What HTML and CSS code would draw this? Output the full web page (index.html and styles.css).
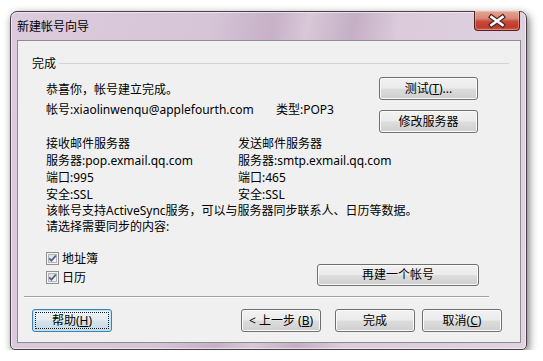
FILE: index.html
```html
<!DOCTYPE html>
<html lang="zh-CN">
<head>
  <meta charset="UTF-8" />
  <title>新建帐号向导</title>
  <link rel="stylesheet" href="styles.css">
</head>
<body>

  <!-- wizard window -->
  <div class="window">
    <div class="titlebar">
      <span class="title">新建帐号向导</span>
      <button class="close" aria-label="关闭">
        <svg width="46" height="20" viewBox="0 0 46 20">
          <path d="M18.5 6 L29.5 14 M29.5 6 L18.5 14" stroke="#4a2a26" stroke-width="5" stroke-linecap="square" fill="none"/>
          <path d="M18.5 6 L29.5 14 M29.5 6 L18.5 14" stroke="#ffffff" stroke-width="2.6" stroke-linecap="square" fill="none"/>
        </svg>
      </button>
    </div>

    <div class="client">
      <div class="group-head"><span>完成</span></div>

      <div class="summary">
        <div class="summary-text">
          <div class="line">恭喜你，帐号建立完成。</div>
          <div class="line second"><span class="acc">帐号:xiaolinwenqu@applefourth.com</span><span>类型:POP3</span></div>
        </div>
        <div class="side-buttons">
          <button class="btn side">测试(<u>T</u>)...</button>
          <button class="btn side">修改服务器</button>
        </div>
      </div>

      <div class="servers">
        <div>接收邮件服务器</div><div>发送邮件服务器</div>
        <div>服务器:pop.exmail.qq.com</div><div>服务器:smtp.exmail.qq.com</div>
        <div>端口:995</div><div>端口:465</div>
        <div>安全:SSL</div><div>安全:SSL</div>
      </div>

      <div class="sync">
        <div>该帐号支持ActiveSync服务，可以与服务器同步联系人、日历等数据。</div>
        <div>请选择需要同步的内容:</div>
      </div>

      <div class="options">
        <div class="checks">
          <label class="check">
            <svg class="box" width="13" height="13" viewBox="0 0 13 13">
              <defs>
                <linearGradient id="boxfill" x1="0" y1="0" x2="1" y2="1">
                  <stop offset="0" stop-color="#d8d8d8"/>
                  <stop offset="1" stop-color="#fbfbfb"/>
                </linearGradient>
              </defs>
              <rect x="0.5" y="0.5" width="12" height="12" fill="#f4f4f4" stroke="#8e8f8f"/>
              <rect x="2.5" y="2.5" width="8" height="8" fill="url(#boxfill)" stroke="#b6b6b6"/>
              <path d="M3.2 6.4 L5.4 8.8 L9.8 3.6" stroke="#4a5f8d" stroke-width="1.7" fill="none"/>
            </svg>
            地址簿
          </label>
          <label class="check">
            <svg class="box" width="13" height="13" viewBox="0 0 13 13">
              <rect x="0.5" y="0.5" width="12" height="12" fill="#f4f4f4" stroke="#8e8f8f"/>
              <rect x="2.5" y="2.5" width="8" height="8" fill="url(#boxfill)" stroke="#b6b6b6"/>
              <path d="M3.2 6.4 L5.4 8.8 L9.8 3.6" stroke="#4a5f8d" stroke-width="1.7" fill="none"/>
            </svg>
            日历
          </label>
        </div>
        <button class="btn wide">再建一个帐号</button>
      </div>

      <div class="separator"></div>

      <div class="footer">
        <button class="btn default">帮助(<u>H</u>)</button>
        <div class="nav">
          <button class="btn">&lt; 上一步 (<u>B</u>)</button>
          <button class="btn finish">完成</button>
          <button class="btn">取消(<u>C</u>)</button>
        </div>
      </div>
    </div>
  </div>

</body>
</html>
```

FILE: styles.css
```css
html, body {
  margin: 0;
  padding: 0;
  background: #ffffff;
  font-family: "Noto Sans", "Noto Sans CJK SC", sans-serif;
  font-size: 12px;
  color: #000;
}

.window {
  margin: 11px 0 0 10px;
  width: 517px;
  height: 339px;
  box-sizing: border-box;
  border: 1px solid #474047;
  border-radius: 7px 7px 5px 5px;
  padding: 0 5px 6px 6px;
  display: flex;
  flex-direction: column;
  background: linear-gradient(100deg, #dccadd 0%, #d6c4d7 35%, #c6b1c7 46%, #d8c8d8 52%, #c4afc5 60%, #dbcbdb 68%, #e1d3e1 100%);
  box-shadow: inset 0 0 0 1px rgba(255, 255, 255, 0.55), 2px 3px 9px rgba(0, 0, 0, 0.55);
}

.titlebar {
  height: 28px;
  display: flex;
  align-items: center;
  flex-shrink: 0;
}

.title {
  font-size: 12px;
  color: #000;
}

.close {
  margin: -1px 1px 0 auto;
  align-self: flex-start;
  width: 46px;
  height: 20px;
  padding: 0;
  border: 1px solid #4e2320;
  border-top: none;
  border-radius: 0 0 4px 4px;
  background: linear-gradient(#e6a597 0%, #d98575 40%, #c9483a 55%, #c2392b 85%, #d0604f 100%);
  box-shadow: inset 0 0 0 1px rgba(255, 220, 210, 0.35);
  display: flex;
  align-items: center;
  justify-content: center;
}

.close svg {
  display: block;
  margin-left: -2px;
}

.client {
  flex: 1;
  box-sizing: border-box;
  background: #f0f0f0;
  border: 1px solid #8d8d8d;
  padding: 15px 11px 0 14px;
  display: flex;
  flex-direction: column;
}

.group-head {
  display: flex;
  align-items: center;
  gap: 3px;
  line-height: 16px;
}

.group-head::after {
  content: "";
  flex: 1;
  border-top: 1px solid #cdd3d7;
  margin-top: -1px;
}

.summary {
  display: flex;
  justify-content: space-between;
  padding: 0 31px 0 14px;
}

.summary-text {
  padding-top: 10px;
}

.line {
  line-height: 16px;
}

.line.second {
  margin-top: 4px;
}

.acc {
  display: inline-block;
  width: 230px;
}

.side-buttons {
  padding-top: 5px;
  display: flex;
  flex-direction: column;
  gap: 10px;
}

.btn {
  font-family: inherit;
  font-size: 12px;
  color: #000;
  width: 80px;
  height: 23px;
  padding: 0;
  border: 1px solid #707070;
  border-radius: 3px;
  background: linear-gradient(#f2f2f2 0%, #ebebeb 48%, #dddddd 52%, #cfcfcf 100%);
  box-shadow: inset 0 0 0 1px #fbfbfb;
  position: relative;
  line-height: 20px;
}

.btn u {
  text-underline-offset: 1px;
}

.btn.side {
  width: 99px;
}

.servers {
  margin-top: 2px;
  padding-left: 14px;
  display: grid;
  grid-template-columns: 192px 1fr;
  line-height: 17px;
}

.sync {
  padding-left: 14px;
  line-height: 16px;
}

.options {
  margin-top: 14px;
  padding: 0 30px 0 14px;
  display: flex;
  justify-content: space-between;
}

.checks {
  display: flex;
  flex-direction: column;
}

.check {
  display: flex;
  align-items: center;
  gap: 3px;
  line-height: 19px;
}

.box {
  display: block;
}

.btn.wide {
  width: 162px;
  height: 22px;
  margin-top: 15px;
}

.separator {
  margin: 9px 20px 0 -8px;
  border-top: 1px solid #a0a0a0;
  border-bottom: 1px solid #ffffff;
}

.footer {
  margin-top: 11px;
  padding-right: 7px;
  display: flex;
  justify-content: space-between;
}

.nav {
  display: flex;
  gap: 7px;
}

.btn.finish {
  margin-left: 7px;
}

.btn.default {
  border-color: #3c7fb1;
  background: linear-gradient(#eef4f8 0%, #e3ecf2 48%, #d4e2ea 52%, #c9dae4 100%);
  box-shadow: inset 0 0 0 1px #b6e6f7;
}

.btn.default::after {
  content: "";
  position: absolute;
  inset: 2px;
  border: 1px dotted #1a1a1a;
  border-radius: 1px;
}
```
